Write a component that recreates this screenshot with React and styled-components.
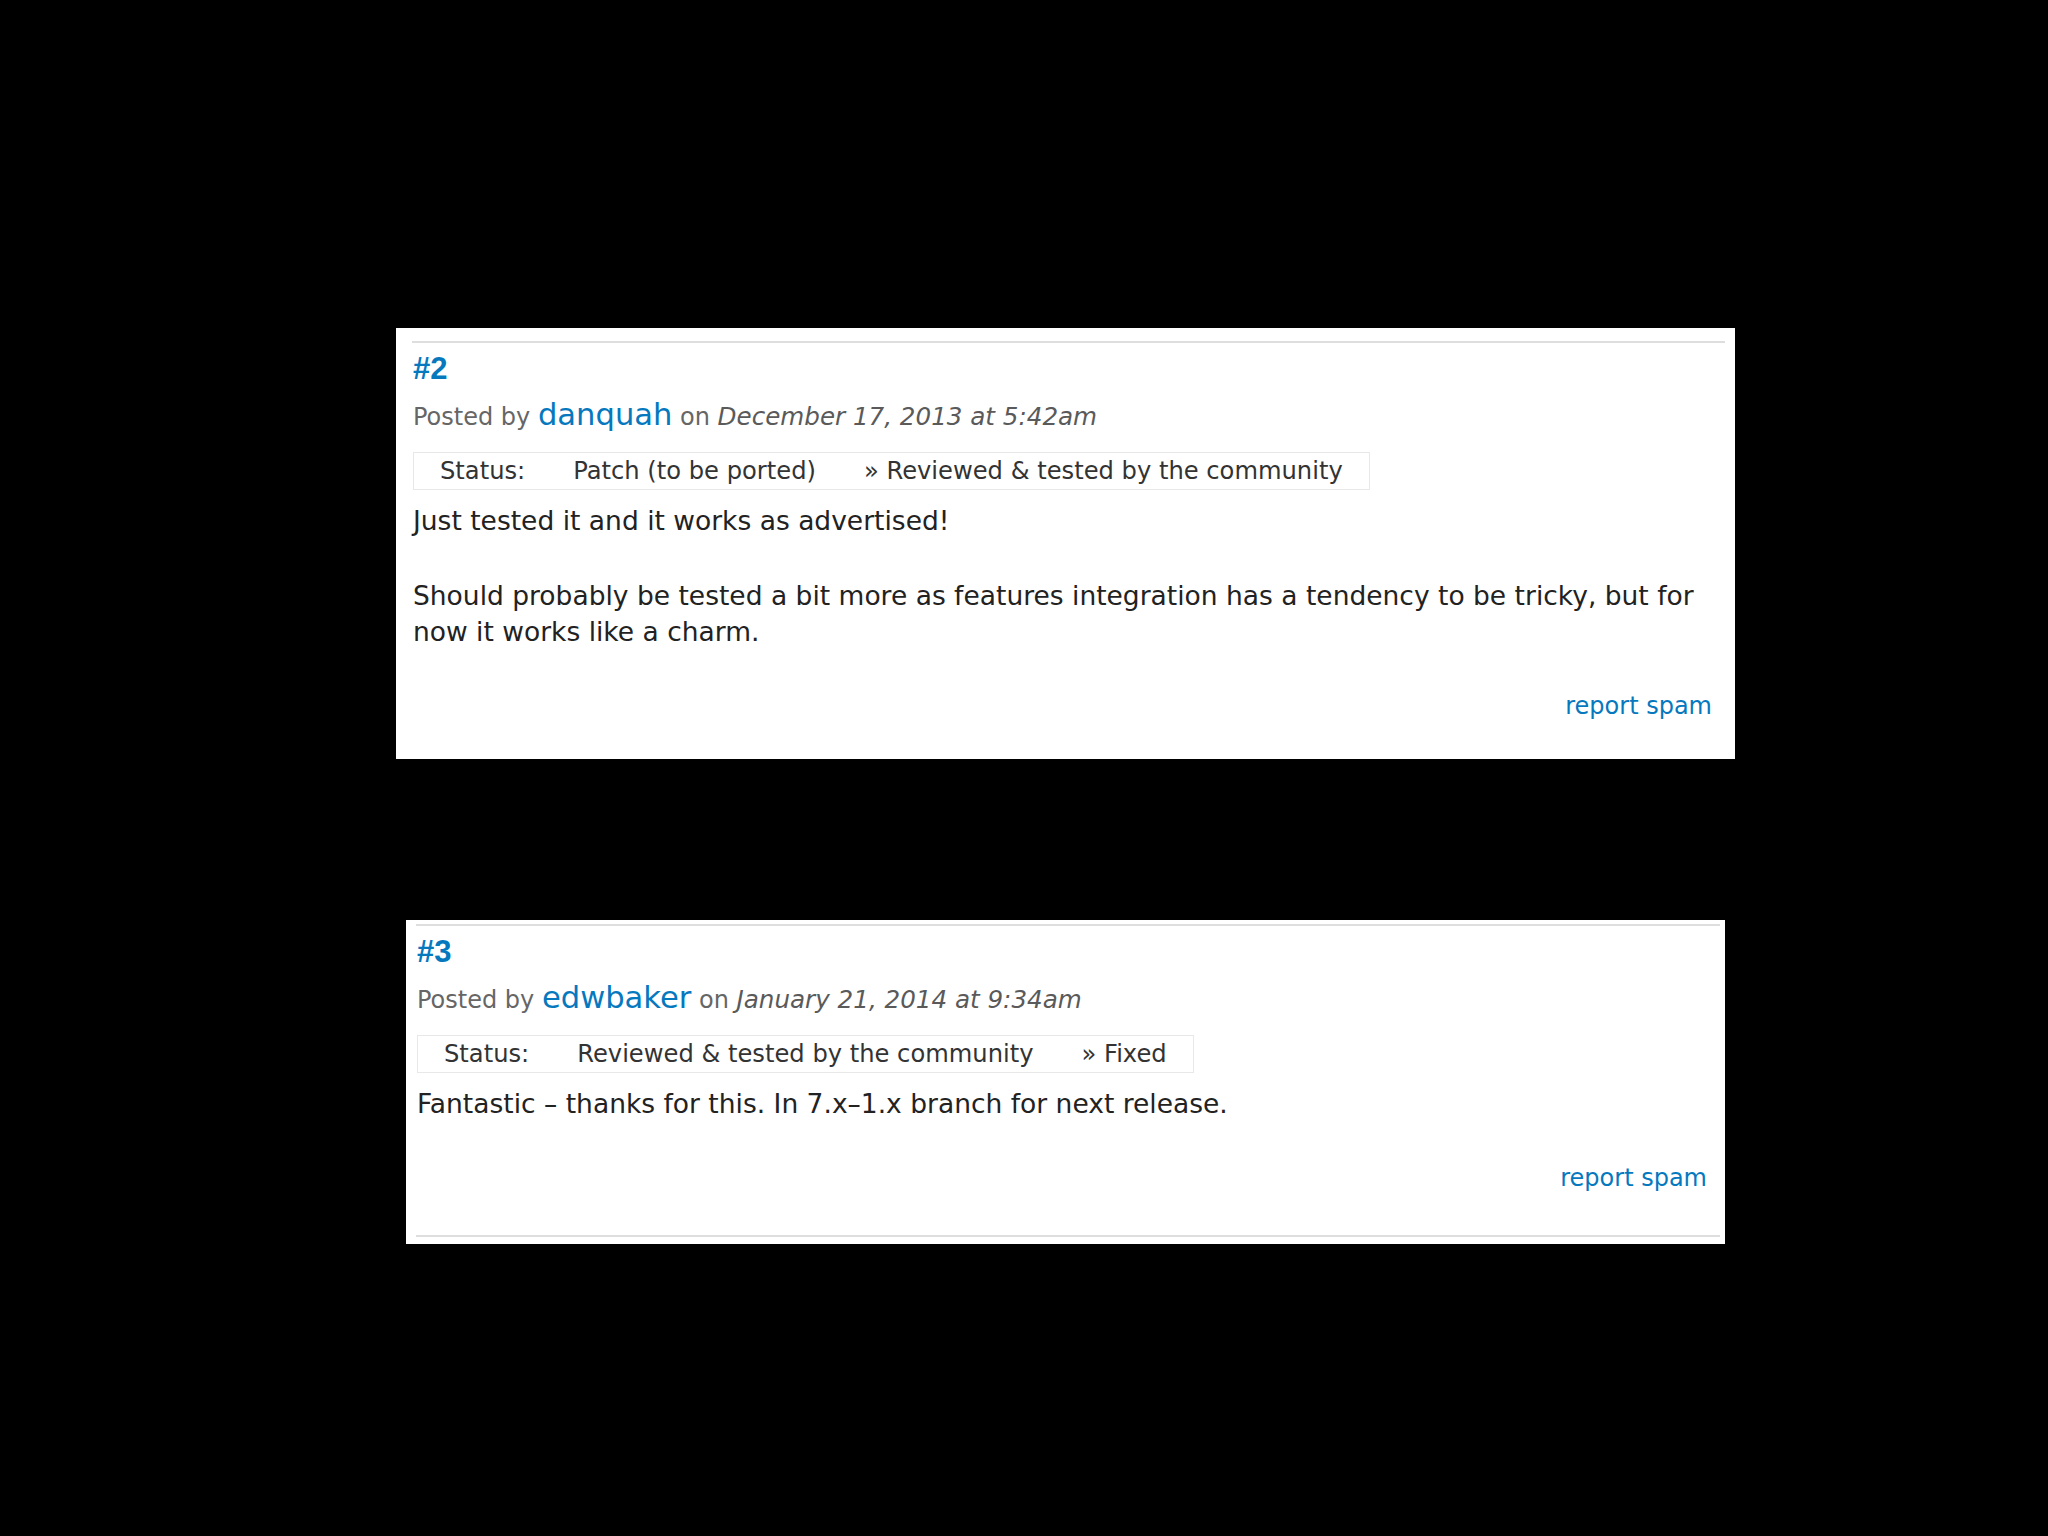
import React from 'react';
import styled, { createGlobalStyle } from 'styled-components';

const GlobalStyle = createGlobalStyle`
  html, body {
    margin: 0;
    padding: 0;
    background: #000;
  }
  body {
    min-height: 1536px;
    font-family: 'DejaVu Sans', Verdana, sans-serif;
  }
`;

const Page = styled.div`
  display: flex;
  flex-direction: column;
  align-items: flex-start;
  padding-top: 328px;
`;

const Card = styled.div`
  box-sizing: border-box;
  width: ${(p) => p.$width}px;
  margin-left: ${(p) => p.$left}px;
  margin-top: ${(p) => p.$gap || 0}px;
  padding: ${(p) => p.$padTop}px ${(p) => p.$padRight}px
    ${(p) => p.$padBottom}px ${(p) => p.$padLeft}px;
  background: #fff;
`;

const Rule = styled.div`
  height: 2px;
  background: #dedede;
`;

const Inner = styled.div`
  padding: 0 13px 0 1px;
`;

const Number = styled.div`
  margin-top: 8px;
  font-family: 'Liberation Sans', Arial, sans-serif;
  font-weight: bold;
  font-size: 31px;
  line-height: 36px;
  color: #0678be;
`;

const Meta = styled.div`
  margin-top: 10px;
  font-size: 24px;
  line-height: 40px;
  color: #666;
`;

const Author = styled.a`
  font-size: 30.6px;
  line-height: 1;
  color: #0678be;
  text-decoration: none;
`;

const Date = styled.em`
  font-size: 24.6px;
  color: #5a5a5a;
`;

const StatusBox = styled.div`
  display: inline-flex;
  margin-top: 15px;
  padding: 0 2px;
  border: 1px solid #e8e8e8;
  font-size: 24.2px;
  line-height: 36px;
  color: #333;
`;

const StatusCell = styled.span`
  padding: 0 24px;
`;

const Body = styled.div`
  margin-top: 13px;
  font-size: 26.5px;
  line-height: 36px;
  color: #222;

  p {
    margin: 0;
  }
  p + p {
    margin-top: 39px;
  }
`;

const Footer = styled.div`
  display: flex;
  justify-content: flex-end;
  margin-top: 40px;
  font-size: 24px;
  line-height: 32px;
`;

const SpamLink = styled.a`
  color: #0678be;
  text-decoration: none;
`;

const BottomRule = styled(Rule)`
  margin-top: 41px;
`;

const comments = [
  {
    num: '#2',
    author: 'danquah',
    date: 'December 17, 2013 at 5:42am',
    from: 'Patch (to be ported)',
    to: '» Reviewed & tested by the community',
    body: [
      'Just tested it and it works as advertised!',
      'Should probably be tested a bit more as features integration has a tendency to be tricky, but for now it works like a charm.',
    ],
    card: { left: 396, width: 1339, padTop: 13, padRight: 10, padLeft: 16, padBottom: 37 },
  },
  {
    num: '#3',
    author: 'edwbaker',
    date: 'January 21, 2014 at 9:34am',
    from: 'Reviewed & tested by the community',
    to: '» Fixed',
    body: ['Fantastic – thanks for this. In 7.x–1.x branch for next release.'],
    card: { left: 406, width: 1319, padTop: 4, padRight: 5, padLeft: 10, padBottom: 7, gap: 161 },
    bottomRule: true,
  },
];

const Comment = ({ c }) => (
  <Card
    $left={c.card.left}
    $width={c.card.width}
    $padTop={c.card.padTop}
    $padRight={c.card.padRight}
    $padLeft={c.card.padLeft}
    $padBottom={c.card.padBottom}
    $gap={c.card.gap}
  >
    <Rule />
    <Inner>
      <Number>{c.num}</Number>
      <Meta>
        Posted by <Author href="#">{c.author}</Author> on <Date>{c.date}</Date>
      </Meta>
      <StatusBox>
        <StatusCell>Status:</StatusCell>
        <StatusCell>{c.from}</StatusCell>
        <StatusCell>{c.to}</StatusCell>
      </StatusBox>
      <Body>
        {c.body.map((t, i) => (
          <p key={i}>{t}</p>
        ))}
      </Body>
      <Footer>
        <SpamLink href="#">report spam</SpamLink>
      </Footer>
    </Inner>
    {c.bottomRule && <BottomRule />}
  </Card>
);

export default function App() {
  return (
    <>
      <GlobalStyle />
      <Page>
        {comments.map((c) => (
          <Comment key={c.num} c={c} />
        ))}
      </Page>
    </>
  );
}
